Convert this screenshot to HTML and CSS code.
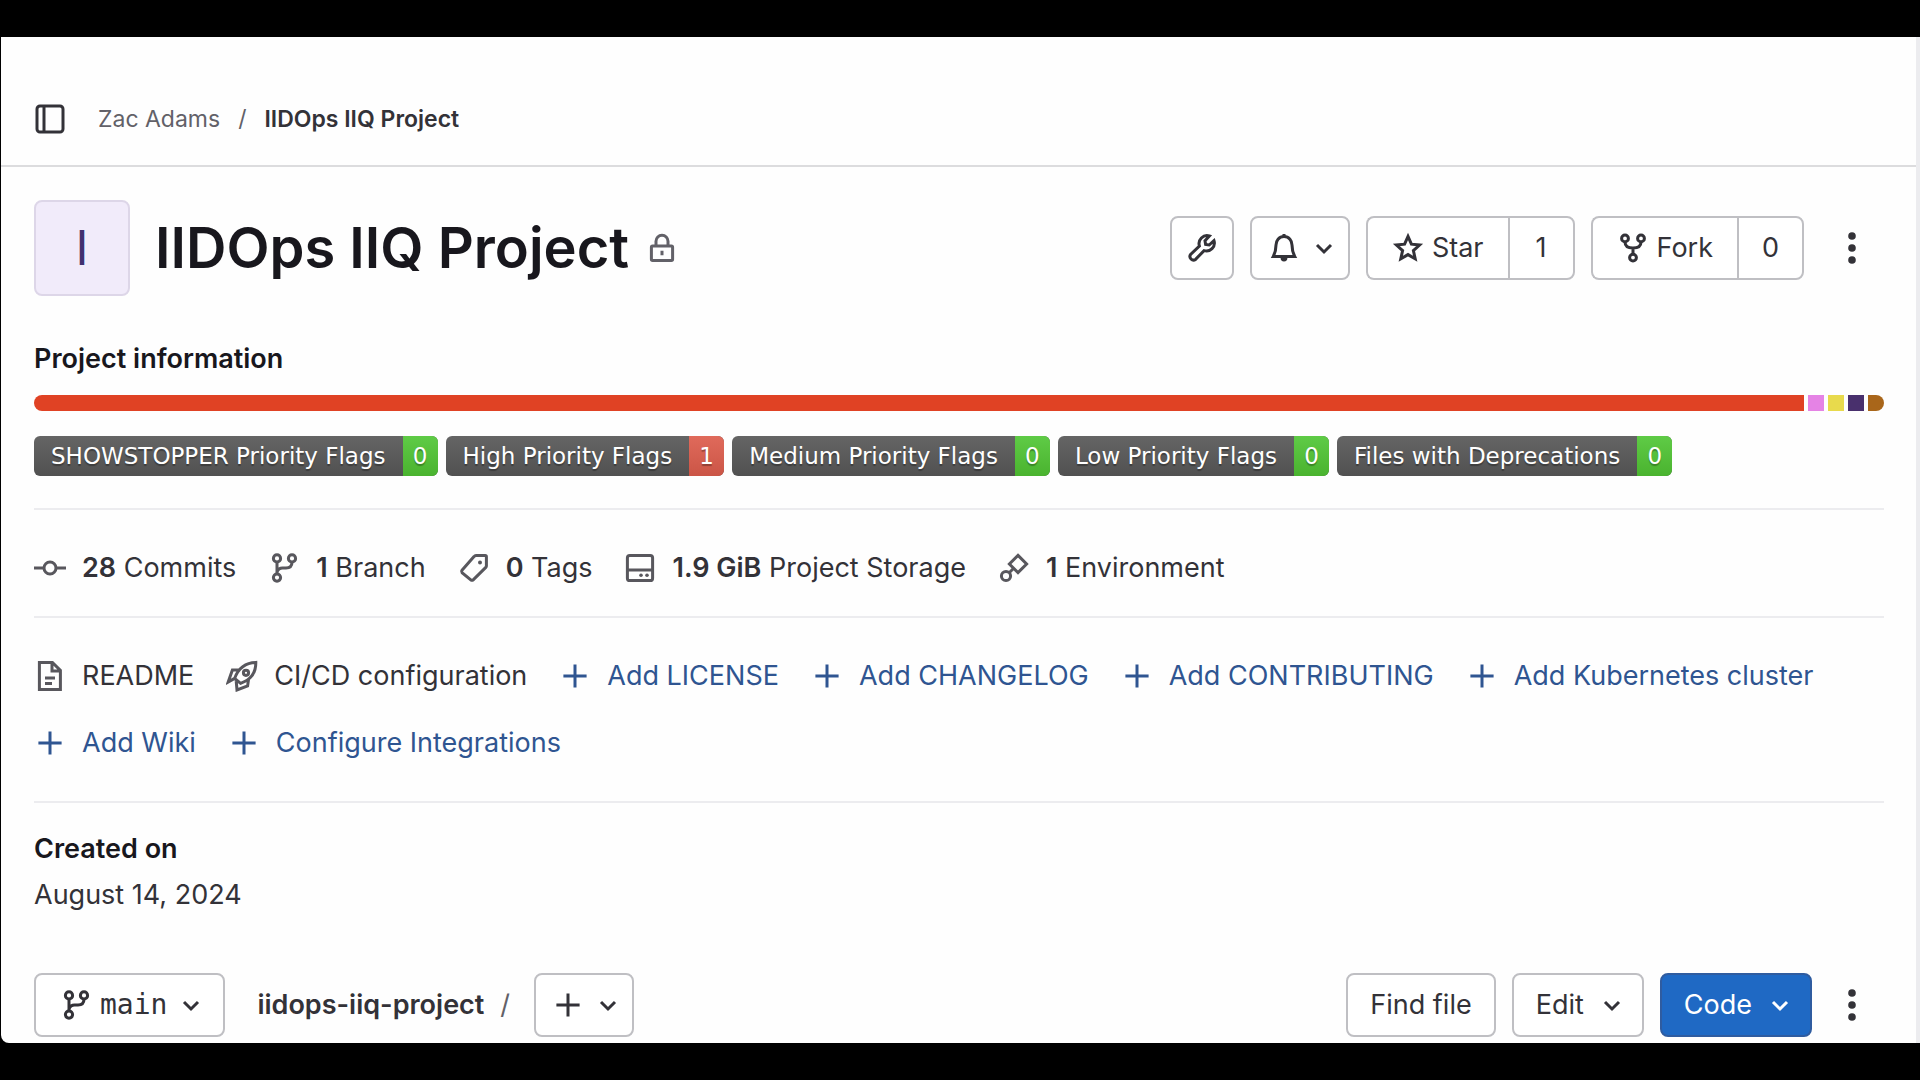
FILE: index.html
```
<!DOCTYPE html>
<html lang="en">

<head>
    <meta charset="UTF-8">
    <meta name="viewport" content="width=device-width, initial-scale=1.0">
    <title>IIDOps IIQ Project</title>
    <link rel="stylesheet" href="styles.css">
</head>

<body>
    <!-- icon sprite -->
    <svg class="sprite" aria-hidden="true">
        <symbol id="sidebar" viewBox="0 0 16 16"><rect x="1.5" y="1.5" width="13" height="13" rx="1.5"/><path d="M5 1.5v13"/></symbol>
        <symbol id="lock" viewBox="0 0 16 16"><rect x="2.7" y="7" width="10.6" height="7.2" rx=".6"/><path d="M5 7V4.6a3 3 0 0 1 6 0V7M8 9.4v2.2"/></symbol>
        <symbol id="wrench" viewBox="0 0 16 16"><path d="M14 4.3l-2.4 2.2-1.8-.3-.3-1.8 2.2-2.4a4 4 0 0 0-5 5l-4.4 4.2a1.8 1.8 0 0 0 2.5 2.5L9 9.3a4 4 0 0 0 5-5z"/></symbol>
        <symbol id="bell" viewBox="0 0 16 16"><path d="M8 2.3c-2.6 0-4 2-4 4.2 0 2.8-.5 4-1.4 5.8h10.8c-.9-1.8-1.4-3-1.4-5.8 0-2.2-1.4-4.2-4-4.2z"/><path d="M8 1v1.3"/><path class="fill" d="M6.3 13h3.4a1.7 1.7 0 0 1-3.4 0z"/></symbol>
        <symbol id="chevron" viewBox="0 0 16 16"><path d="M4.5 6.5L8 10l3.5-3.5"/></symbol>
        <symbol id="star" viewBox="0 0 16 16"><path d="M8 2.2l1.7 3.9 4.1.4-3.1 2.8.9 4.1L8 11.300l-3.600 2.100.9-4.100-3.100-2.800 4.100-.4z"/></symbol>
        <symbol id="fork" viewBox="0 0 16 16"><circle cx="4" cy="3.2" r="1.7"/><circle cx="12" cy="3.2" r="1.7"/><circle cx="8" cy="12.8" r="1.7"/><path d="M4 5c0 2 1.2 3 4 3s4-1 4-3M8 8v3"/></symbol>
        <symbol id="dots" viewBox="0 0 16 16"><circle class="fill" cx="8" cy="2" r="1.9"/><circle class="fill" cx="8" cy="8" r="1.9"/><circle class="fill" cx="8" cy="14" r="1.9"/></symbol>
        <symbol id="commit" viewBox="0 0 16 16"><circle cx="8" cy="8" r="3"/><path d="M0 8h5M11 8h5"/></symbol>
        <symbol id="branch" viewBox="0 0 16 16"><circle cx="4.500" cy="3.200" r="1.800"/><circle cx="12" cy="3.200" r="1.800"/><circle cx="4.500" cy="12.800" r="1.800"/><path d="M4.500 5v6M12 5c0 2-1 3-3 3H7.500a3 3 0 0 0-3 2"/></symbol>
        <symbol id="tag" viewBox="0 0 16 16"><path d="M9 1.800h4.600q.6 0 .6.600V7q0 .4-.3.700l-6.300 6.200q-.6.500-1.200 0L2 10.300q-.5-.6 0-1.200L8 2.300q.4-.5 1-.5z"/><circle class="fill" cx="11" cy="5.200" r="1"/></symbol>
        <symbol id="disk" viewBox="0 0 16 16"><rect x="1.7" y="1.7" width="12.6" height="12.6" rx="1.2"/><path d="M1.7 9h12.6"/><circle class="fill" cx="8.5" cy="11.6" r=".9"/><circle class="fill" cx="11.5" cy="11.6" r=".9"/></symbol>
        <symbol id="environment" viewBox="0 0 16 16"><path d="M10 1.7L14.3 6 10 10.3 5.7 6z"/><circle cx="4" cy="12" r="2.3"/><path d="M5.6 10.4l2-2"/></symbol>
        <symbol id="doc" viewBox="0 0 16 16"><path d="M2.7 1.2h6.500l4 4v9.600H2.700zM9 1.500v4h4M5.500 9h5M5.500 11.700H9"/></symbol>
        <symbol id="rocket" viewBox="0 0 16 16"><path d="M14.900 1.200C9.500 1.300 6.300 3.700 4.300 9.200l3 2.500c5-1.800 7.700-5.200 7.600-10.500zM6.700 5H3.200L1.100 11l3.200-1.800M11.300 9.500l-.5 3.500-5.300 2-.4-4.500"/><circle cx="10" cy="6.400" r="1.300"/></symbol>
        <symbol id="plus" viewBox="0 0 16 16"><path d="M8 2.200v11.600M2.200 8h11.600"/></symbol>
    </svg>

    <div class="page">
        <header class="top-bar">
            <button class="icon-button" aria-label="Primary navigation sidebar"><svg class="icon"><use href="#sidebar"/></svg></button>
            <nav class="breadcrumbs" aria-label="Breadcrumbs">
                <a href="#">Zac Adams</a>
                <span>/</span>
                <a href="#" class="current">IIDOps IIQ Project</a>
            </nav>
        </header>

        <main>
            <div class="project-header">
                <div class="avatar">I</div>
                <h1>IIDOps IIQ Project</h1>
                <svg class="icon muted"><use href="#lock"/></svg>
                <div class="actions">
                    <button class="btn square" aria-label="Admin area"><svg class="icon"><use href="#wrench"/></svg></button>
                    <button class="btn icons" aria-label="Notifications"><svg class="icon"><use href="#bell"/></svg><svg class="icon"><use href="#chevron"/></svg></button>
                    <div class="btn-group">
                        <button class="btn labelled"><svg class="icon"><use href="#star"/></svg>Star</button>
                        <a class="btn count" href="#">1</a>
                    </div>
                    <div class="btn-group">
                        <button class="btn labelled"><svg class="icon"><use href="#fork"/></svg>Fork</button>
                        <a class="btn count" href="#">0</a>
                    </div>
                    <button class="icon-button more" aria-label="More actions"><svg class="icon"><use href="#dots"/></svg></button>
                </div>
            </div>

            <section class="information">
                <h2>Project information</h2>
                <div class="languages">
                    <span class="lang red"></span>
                    <span class="lang pink"></span>
                    <span class="lang yellow"></span>
                    <span class="lang purple"></span>
                    <span class="lang brown"></span>
                </div>
                <div class="badges">
                    <a class="badge" href="#"><span class="badge-name">SHOWSTOPPER Priority Flags</span><span class="badge-value">0</span></a>
                    <a class="badge" href="#"><span class="badge-name">High Priority Flags</span><span class="badge-value danger">1</span></a>
                    <a class="badge" href="#"><span class="badge-name">Medium Priority Flags</span><span class="badge-value">0</span></a>
                    <a class="badge" href="#"><span class="badge-name">Low Priority Flags</span><span class="badge-value">0</span></a>
                    <a class="badge" href="#"><span class="badge-name">Files with Deprecations</span><span class="badge-value">0</span></a>
                </div>
            </section>

            <nav class="links" aria-label="Statistics">
                <a href="#"><svg class="icon"><use href="#commit"/></svg><span><strong>28</strong> Commits</span></a>
                <a href="#"><svg class="icon"><use href="#branch"/></svg><span><strong>1</strong> Branch</span></a>
                <a href="#"><svg class="icon"><use href="#tag"/></svg><span><strong>0</strong> Tags</span></a>
                <a href="#"><svg class="icon"><use href="#disk"/></svg><span><strong>1.9 GiB</strong> Project Storage</span></a>
                <a href="#"><svg class="icon"><use href="#environment"/></svg><span><strong>1</strong> Environment</span></a>
            </nav>

            <nav class="links files" aria-label="Project files">
                <a href="#"><svg class="icon"><use href="#doc"/></svg>README</a>
                <a href="#"><svg class="icon"><use href="#rocket"/></svg>CI/CD configuration</a>
                <a href="#" class="add"><svg class="icon"><use href="#plus"/></svg>Add LICENSE</a>
                <a href="#" class="add"><svg class="icon"><use href="#plus"/></svg>Add CHANGELOG</a>
                <a href="#" class="add"><svg class="icon"><use href="#plus"/></svg>Add CONTRIBUTING</a>
                <a href="#" class="add"><svg class="icon"><use href="#plus"/></svg>Add Kubernetes cluster</a>
                <a href="#" class="add"><svg class="icon"><use href="#plus"/></svg>Add Wiki</a>
                <a href="#" class="add"><svg class="icon"><use href="#plus"/></svg>Configure Integrations</a>
            </nav>

            <section class="created">
                <h2>Created on</h2>
                <p>August 14, 2024</p>
            </section>

            <div class="tree-controls">
                <button class="btn branch"><svg class="icon"><use href="#branch"/></svg>main<svg class="icon"><use href="#chevron"/></svg></button>
                <div class="path"><a href="#">iidops-iiq-project</a><span>/</span></div>
                <button class="btn icons" aria-label="Add to tree"><svg class="icon"><use href="#plus"/></svg><svg class="icon"><use href="#chevron"/></svg></button>
                <div class="actions">
                    <button class="btn">Find file</button>
                    <button class="btn dropdown">Edit<svg class="icon"><use href="#chevron"/></svg></button>
                    <button class="btn dropdown confirm">Code<svg class="icon"><use href="#chevron"/></svg></button>
                    <button class="icon-button more" aria-label="More actions"><svg class="icon"><use href="#dots"/></svg></button>
                </div>
            </div>
        </main>
    </div>
</body>

</html>
```
FILE: styles.css
```
* {
    box-sizing: border-box;
}

body {
    margin: 0;
    padding: 37px 0;
    background-color: #000;
    color: #333238;
    font-family: Inter, "Liberation Sans", sans-serif;
    font-size: 27px;
    line-height: 40px;
}

.page {
    margin-left: 1px;
    background-color: #fefefe;
    border-right: 4px solid #ececef;
    border-bottom-left-radius: 8px;
}

a {
    color: inherit;
    text-decoration: none;
}

button {
    font: inherit;
    color: inherit;
    cursor: pointer;
}

h1,
h2,
p {
    margin: 0;
}

h2 {
    font-size: 27px;
    font-weight: 600;
    color: #18171d;
}

/* Icons */
.sprite {
    display: none;
}

.icon {
    flex: none;
    width: 32px;
    height: 32px;
    fill: none;
    stroke: currentColor;
    stroke-width: 1.5;
}

.icon.muted {
    color: #626168;
}

.fill {
    fill: currentColor;
    stroke: none;
}

.icon-button {
    display: flex;
    padding: 0;
    border: none;
    background: none;
}

/* Top bar */
.top-bar {
    display: flex;
    align-items: center;
    gap: 32px;
    padding: 62px 33px 26px;
    border-bottom: 2px solid #dcdcde;
}

.breadcrumbs {
    display: flex;
    gap: 18px;
    font-size: 23px;
    color: #626168;
}

.breadcrumbs .current {
    font-weight: 600;
    color: #333238;
}

main {
    padding: 33px 32px 6px 33px;
}

/* Project header */
.project-header {
    display: flex;
    align-items: center;
}

.avatar {
    width: 96px;
    height: 96px;
    margin-right: 25px;
    border: 2px solid #ddd6e8;
    border-radius: 8px;
    background-color: #f1ebfa;
    color: #41306f;
    font-size: 48px;
    line-height: 92px;
    text-align: center;
}

h1 {
    margin-right: 17px;
    font-size: 56px;
    font-weight: 600;
    line-height: 64px;
    color: #18171d;
}

.actions {
    display: flex;
    align-items: center;
    gap: 16px;
    margin-left: auto;
}

.btn {
    display: flex;
    align-items: center;
    justify-content: center;
    height: 64px;
    padding: 0 22px;
    border: 2px solid #bfbfc3;
    border-radius: 8px;
    background-color: #fff;
}

.btn.square {
    width: 64px;
    padding: 0;
}

.btn.icons {
    gap: 8px;
    padding: 0 8px 0 16px;
}

.btn-group {
    display: flex;
}

.btn-group .labelled {
    gap: 8px;
    padding: 0 24px;
    border-right: none;
    border-radius: 8px 0 0 8px;
}

.btn-group .count {
    min-width: 67px;
    border-radius: 0 8px 8px 0;
}

.more {
    justify-content: center;
    width: 64px;
}

/* Project information */
.information {
    padding: 43px 0 32px;
}

.languages {
    display: flex;
    gap: 4px;
    height: 16px;
    margin: 16px 0 25px;
    border-radius: 8px;
    overflow: hidden;
}

.lang {
    width: 16px;
}

.lang.red {
    flex: 1;
    background-color: #e04224;
}

.lang.pink {
    background-color: #e583e5;
}

.lang.yellow {
    background-color: #e8da4c;
}

.lang.purple {
    background-color: #49306d;
}

.lang.brown {
    background-color: #a9661a;
}

.badges {
    display: flex;
    gap: 8px;
}

.badge {
    display: flex;
    border-radius: 6px;
    overflow: hidden;
    background: linear-gradient(#656565, #515151);
    color: #fff;
    font-family: "DejaVu Sans", sans-serif;
    font-size: 23px;
    text-shadow: 0 2px 1px rgba(0, 0, 0, 0.3);
}

.badge-name {
    padding: 0 17px;
}

.badge-value {
    width: 35px;
    background: linear-gradient(#5fcb46, #4ab32f);
    text-align: center;
}

.badge-value.danger {
    background: linear-gradient(#e06a5b, #cb5546);
}

/* Stats and file links */
.links {
    display: flex;
    flex-wrap: wrap;
    gap: 27px 32px;
    padding: 38px 0 28px;
    border-top: 2px solid #ececef;
}

.links.files {
    padding-bottom: 38px;
}

.links a {
    display: flex;
    align-items: center;
    gap: 16px;
}

.links .icon {
    color: #58575d;
}

.links .add,
.links .add .icon {
    color: #2f5591;
}

.links strong {
    font-weight: 600;
}

.created {
    padding: 26px 0 58px;
    border-top: 2px solid #ececef;
}

.created p {
    padding-top: 6px;
}

/* Repository controls */
.tree-controls {
    display: flex;
    align-items: center;
}

.btn.branch {
    gap: 8px;
    margin-right: 32px;
    padding: 0 16px 0 24px;
    font-family: "DejaVu Sans Mono", monospace;
    font-size: 28px;
}

.path {
    display: flex;
    gap: 16px;
    margin-right: 24px;
    color: #626168;
}

.path a {
    font-weight: 600;
    color: #333238;
}

.btn.dropdown {
    gap: 12px;
    padding-right: 14px;
}

.btn.confirm {
    border-color: #2f5ca0;
    background-color: #1f69c4;
    color: #fff;
}

.tree-controls .more {
    margin-left: -8px;
}
```
